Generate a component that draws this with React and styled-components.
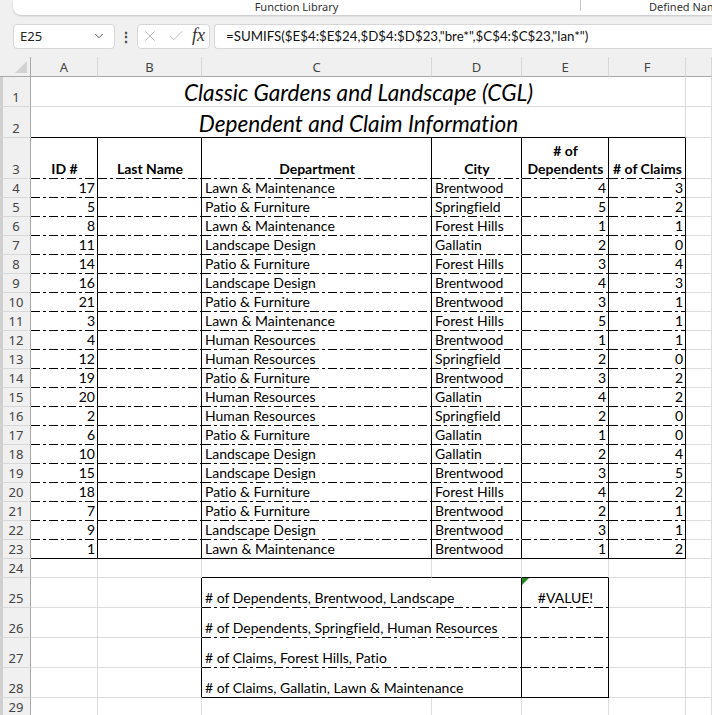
import React from "react"
import styled, { createGlobalStyle, css } from "styled-components"
import { ChevronDown, X, Check } from "lucide-react"

const GlobalStyle = createGlobalStyle`
  html, body {
    margin: 0;
    padding: 0;
    background: #f0f0f0;
    overflow: hidden;
  }
`

const CELL_FONT = `Lato, "Liberation Sans", sans-serif`
const UI_FONT = `"Noto Sans", "Open Sans", sans-serif`
const GRID = "#dcdcdc"

const Page = styled.div`
  width: 712px;
  height: 715px;
  overflow: hidden;
  background: #f0f0f0;
  font-variant-ligatures: none;
`

const Ribbon = styled.div`
  height: 15px;
  margin-left: 13px;
  background: #fff;
  border-bottom-left-radius: 8px;
  box-shadow: 0 1px 2px rgba(0, 0, 0, 0.18);
  display: flex;
  align-items: flex-start;
  font-family: ${UI_FONT};
  font-size: 11px;
  color: #333;
  overflow: hidden;
  white-space: nowrap;
`

const RibbonGroup = styled.div`
  width: ${p => p.$width}px;
  line-height: 13px;
  text-align: center;
  flex: none;
`

const RibbonSep = styled.div`
  width: 1px;
  height: 11px;
  background: #c9c9c9;
  flex: none;
`

const RibbonLabel = styled.div`
  padding-left: 68px;
  line-height: 13px;
`

const FormulaBar = styled.div`
  height: 42px;
  display: flex;
  align-items: center;
  padding-left: 13px;
`

const Box = styled.div`
  height: 25px;
  box-sizing: border-box;
  background: #fff;
  border: 1px solid #d6d6d6;
  border-radius: 4px;
  display: flex;
  align-items: center;
  flex: none;
`

const NameBox = styled(Box)`
  width: 102px;
  padding: 0 8px 0 6px;
  justify-content: space-between;
  font-family: ${UI_FONT};
  font-size: 13px;
  color: #222;
`

const Dots = styled.div`
  width: 22px;
  text-align: center;
  font-family: ${UI_FONT};
  font-size: 14px;
  font-weight: 700;
  color: #444;
  flex: none;
`

const FxBox = styled(Box)`
  width: 73px;
  padding: 0 4px 0 3px;
  justify-content: space-between;
  color: #b0b0b0;
`

const FxText = styled.span`
  font-family: "Liberation Serif", serif;
  font-style: italic;
  font-size: 18px;
  color: #333;
  line-height: 1;
  padding-bottom: 2px;
`

const FormulaInput = styled(Box)`
  flex: 1;
  margin-left: 4px;
  border-right: none;
  border-radius: 4px 0 0 4px;
  padding-left: 11px;
  font-family: ${CELL_FONT};
  font-size: 13.3px;
  color: #111;
  white-space: nowrap;
  overflow: hidden;
`

const Sheet = styled.div`
  display: grid;
  grid-template-columns: 31px 67px 104px 230px 90px 87px 77px 1fr;
  grid-template-rows: 20px 30px 31px 41px repeat(21, 19px) 30px 30px 30px 30px 19px;
  background: #fff;
`

const ColHead = styled.div`
  box-sizing: border-box;
  background: #f0f0f0;
  border-right: 1px solid ${p => (p.$corner ? "#a8a8a8" : "#d8d8d8")};
  border-bottom: 1px solid #a8a8a8;
  display: flex;
  align-items: center;
  justify-content: center;
  font-family: ${UI_FONT};
  font-size: 13px;
  color: #444;
  position: relative;
`

const RowHead = styled.div`
  box-sizing: border-box;
  background: #f0f0f0;
  border-right: 1px solid #a8a8a8;
  border-bottom: 1px solid #d8d8d8;
  box-shadow: inset 3px 0 0 #cfcfcf;
  display: flex;
  align-items: flex-end;
  justify-content: center;
  padding: 0 0 0 2px;
  font-family: ${UI_FONT};
  font-size: 13px;
  line-height: 17px;
  color: #444;
`

const dashDot = css`
  border-bottom-color: transparent;
  background-image: repeating-linear-gradient(
    to right,
    #000 0 9px,
    transparent 9px 12px,
    #000 12px 15px,
    transparent 15px 18px
  );
  background-size: 100% 1px;
  background-position: left bottom;
  background-origin: border-box;
  background-repeat: no-repeat;
`

const Cell = styled.div`
  box-sizing: border-box;
  grid-column: ${p => p.$span || "auto"};
  border-right: 1px solid ${p => (p.$right === "solid" ? "#000" : GRID)};
  border-bottom: 1px solid ${p => (p.$bottom === "solid" ? "#000" : GRID)};
  ${p => p.$bottom === "dashdot" && dashDot}
  display: flex;
  align-items: flex-end;
  justify-content: ${p =>
    p.$align === "right" ? "flex-end" : p.$align === "center" ? "center" : "flex-start"};
  text-align: ${p => p.$align || "left"};
  padding: 0 2px 0 3px;
  font-family: ${CELL_FONT};
  font-size: ${p => (p.$title ? "22.6px" : "14px")};
  font-style: ${p => (p.$title ? "italic" : "normal")};
  font-weight: ${p => (p.$bold ? 700 : 400)};
  line-height: ${p => (p.$title ? "27px" : "18px")};
  color: #000;
  white-space: ${p => (p.$wrap ? "normal" : "nowrap")};
  overflow: visible;
  position: relative;
`

const ErrorFlag = styled.span`
  position: absolute;
  top: 0;
  left: 0;
  width: 0;
  height: 0;
  border-top: 7px solid #1f8a1f;
  border-right: 7px solid transparent;
`

const CornerTriangle = styled.svg`
  position: absolute;
  right: 3px;
  bottom: 3px;
`

const rows = [
  [17, "Lawn & Maintenance", "Brentwood", 4, 3],
  [5, "Patio & Furniture", "Springfield", 5, 2],
  [8, "Lawn & Maintenance", "Forest Hills", 1, 1],
  [11, "Landscape Design", "Gallatin", 2, 0],
  [14, "Patio & Furniture", "Forest Hills", 3, 4],
  [16, "Landscape Design", "Brentwood", 4, 3],
  [21, "Patio & Furniture", "Brentwood", 3, 1],
  [3, "Lawn & Maintenance", "Forest Hills", 5, 1],
  [4, "Human Resources", "Brentwood", 1, 1],
  [12, "Human Resources", "Springfield", 2, 0],
  [19, "Patio & Furniture", "Brentwood", 3, 2],
  [20, "Human Resources", "Gallatin", 4, 2],
  [2, "Human Resources", "Springfield", 2, 0],
  [6, "Patio & Furniture", "Gallatin", 1, 0],
  [10, "Landscape Design", "Gallatin", 2, 4],
  [15, "Landscape Design", "Brentwood", 3, 5],
  [18, "Patio & Furniture", "Forest Hills", 4, 2],
  [7, "Patio & Furniture", "Brentwood", 2, 1],
  [9, "Landscape Design", "Brentwood", 3, 1],
  [1, "Lawn & Maintenance", "Brentwood", 1, 2],
]

const summary = [
  ["# of Dependents, Brentwood, Landscape", "#VALUE!"],
  ["# of Dependents, Springfield, Human Resources", ""],
  ["# of Claims, Forest Hills, Patio", ""],
  ["# of Claims, Gallatin, Lawn & Maintenance", ""],
]

const headers = [
  ["ID #"],
  ["Last Name"],
  ["Department"],
  ["City"],
  ["# of Dependents", true],
  ["# of Claims"],
]

export default function App() {
  return (
    <Page>
      <GlobalStyle />
      <Ribbon>
        <RibbonGroup $width={567}>Function Library</RibbonGroup>
        <RibbonSep />
        <RibbonLabel>Defined Nam</RibbonLabel>
      </Ribbon>

      <FormulaBar>
        <NameBox>
          <span>E25</span>
          <ChevronDown size={14} strokeWidth={1.6} color="#444" />
        </NameBox>
        <Dots>⋮</Dots>
        <FxBox>
          <X size={18} strokeWidth={1.1} />
          <Check size={18} strokeWidth={1.1} />
          <FxText>fx</FxText>
        </FxBox>
        <FormulaInput>
          =SUMIFS($E$4:$E$24,$D$4:$D$23,"bre*",$C$4:$C$23,"lan*")
        </FormulaInput>
      </FormulaBar>

      <Sheet>
        <ColHead $corner>
          <CornerTriangle width="12" height="12" viewBox="0 0 12 12">
            <polygon points="12,0 12,12 0,12" fill="#d2d2d2" />
          </CornerTriangle>
        </ColHead>
        {["A", "B", "C", "D", "E", "F", ""].map((c, i) => (
          <ColHead key={i}>{c}</ColHead>
        ))}

        <RowHead>1</RowHead>
        <Cell $span="span 6" $align="center" $title>
          Classic Gardens and Landscape (CGL)
        </Cell>
        <Cell />

        <RowHead>2</RowHead>
        <Cell $span="span 6" $align="center" $title $bottom="solid">
          Dependent and Claim Information
        </Cell>
        <Cell />

        <RowHead>3</RowHead>
        {headers.map(([label, wrap], i) => (
          <Cell key={i} $align="center" $bold $wrap={wrap} $right="solid" $bottom="dashdot">
            {label}
          </Cell>
        ))}
        <Cell />

        {rows.map((r, i) => {
          const bottom = i === rows.length - 1 ? "solid" : "dashdot"
          return (
            <React.Fragment key={i}>
              <RowHead>{i + 4}</RowHead>
              <Cell $align="right" $right="solid" $bottom={bottom}>{r[0]}</Cell>
              <Cell $right="solid" $bottom={bottom} />
              <Cell $right="solid" $bottom={bottom}>{r[1]}</Cell>
              <Cell $right="solid" $bottom={bottom}>{r[2]}</Cell>
              <Cell $align="right" $right="solid" $bottom={bottom}>{r[3]}</Cell>
              <Cell $align="right" $right="solid" $bottom={bottom}>{r[4]}</Cell>
              <Cell />
            </React.Fragment>
          )
        })}

        <RowHead>24</RowHead>
        <Cell />
        <Cell />
        <Cell $bottom="solid" />
        <Cell $bottom="solid" />
        <Cell $bottom="solid" />
        <Cell />
        <Cell />

        {summary.map(([label, value], i) => {
          const bottom = i === summary.length - 1 ? "solid" : "dashdot"
          return (
            <React.Fragment key={i}>
              <RowHead>{i + 25}</RowHead>
              <Cell />
              <Cell $right="solid" />
              <Cell $span="span 2" $right="solid" $bottom={bottom}>{label}</Cell>
              <Cell $align="center" $right="solid" $bottom={bottom}>
                {i === 0 && <ErrorFlag />}
                {value}
              </Cell>
              <Cell />
              <Cell />
            </React.Fragment>
          )
        })}

        <RowHead>29</RowHead>
        {Array.from({ length: 7 }).map((_, i) => (
          <Cell key={i} />
        ))}
      </Sheet>
    </Page>
  )
}
